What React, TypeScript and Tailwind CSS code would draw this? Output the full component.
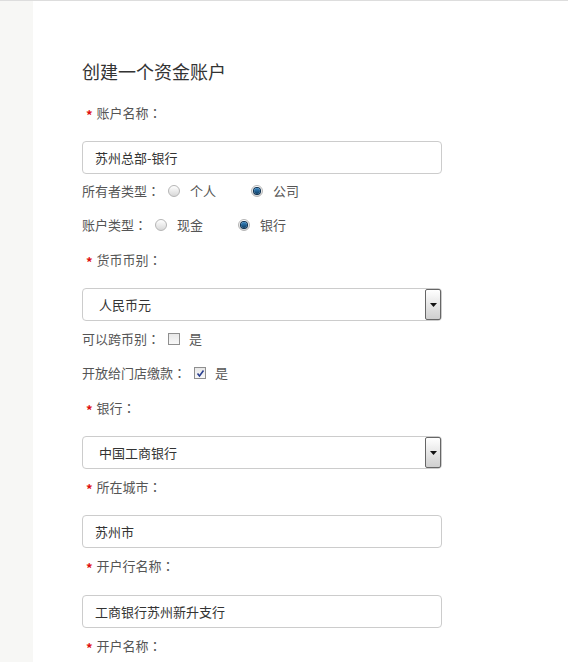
import React from "react";

const FONT = { fontFamily: '"Noto Sans CJK SC", "Noto Sans", sans-serif' };
const COLON_FONT = { fontFamily: '"Noto Sans CJK TC", "Noto Sans CJK SC", sans-serif' };

// full-width colon, centred like the reference
function Colon() {
  return <span style={COLON_FONT}>：</span>;
}

function Label({ text, className = "" }: { text: string; className?: string }) {
  return (
    <div className={`flex h-[20px] items-center text-[13px] leading-[20px] text-[#555] ${className}`}>
      <span className="ml-[4px] mr-[4px] mt-[4px] text-[13px] font-bold leading-[20px] text-[#e01010]">*</span>
      <span>{text}</span>
      <Colon />
    </div>
  );
}

function TextInput({ value, className = "" }: { value: string; className?: string }) {
  return (
    <div
      className={`flex h-[33px] w-[360px] items-center rounded-[4px] border border-[#cccccc] bg-white pl-[12px] text-[13px] text-[#333] ${className}`}
    >
      {value}
    </div>
  );
}

function SelectBox({ value, className = "" }: { value: string; className?: string }) {
  return (
    <div
      className={`flex h-[33px] w-[360px] items-center justify-between rounded-[4px] border border-[#cccccc] bg-white pl-[16px] text-[13px] text-[#333] ${className}`}
    >
      <span>{value}</span>
      <div className="flex h-[31px] w-[16px] items-center justify-center rounded-[2px] border border-[#666] bg-gradient-to-b from-white to-[#cfcfcf]">
        <svg width="7" height="4" viewBox="0 0 7 4">
          <path d="M0 0 L7 0 L3.5 4 Z" fill="#111" />
        </svg>
      </div>
    </div>
  );
}

function Radio({ checked }: { checked?: boolean }) {
  return (
    <span className="flex h-[12px] w-[12px] items-center justify-center rounded-full border border-[#b5b5b5] bg-gradient-to-b from-white to-[#d8d8d8]">
      {checked && (
        <span className="h-[6px] w-[6px] rounded-full bg-gradient-to-b from-[#3d8bc6] to-[#0b3d66] ring-1 ring-[#0a2d4d]" />
      )}
    </span>
  );
}

function Checkbox({ checked }: { checked?: boolean }) {
  return (
    <span className="flex h-[12px] w-[12px] items-center justify-center border border-[#8f8f8f] bg-gradient-to-b from-[#e8e8e8] to-[#f8f8f8]">
      {checked && (
        <svg width="9" height="9" viewBox="0 0 9 9">
          <path d="M1.5 4.5 L3.5 7 L7.5 1.5" stroke="#2b3f8f" strokeWidth="1.6" fill="none" />
        </svg>
      )}
    </span>
  );
}

function RadioRow({
  label,
  options,
  className = "",
}: {
  label: string;
  options: { text: string; checked?: boolean }[];
  className?: string;
}) {
  return (
    <div className={`flex h-[20px] items-center text-[13px] leading-[20px] text-[#555] ${className}`}>
      <span>{label}</span>
      <Colon />
      {options.map((opt, i) => (
        <span key={i} className={`ml-[8px] flex items-center ${i === 0 ? "mr-[27px]" : ""}`}>
          <Radio checked={opt.checked} />
          <span className="ml-[10px]">{opt.text}</span>
        </span>
      ))}
    </div>
  );
}

function CheckRow({ label, checked, className = "" }: { label: string; checked?: boolean; className?: string }) {
  return (
    <div className={`flex h-[20px] items-center text-[13px] leading-[20px] text-[#555] ${className}`}>
      <span>{label}</span>
      <Colon />
      <span className="ml-[8px]">
        <Checkbox checked={checked} />
      </span>
      <span className="ml-[9px]">是</span>
    </div>
  );
}

export default function App() {
  return (
    <div className="flex h-[662px] w-full overflow-hidden border-t border-[#dddddd] bg-white" style={FONT}>
      <aside className="w-[33px] shrink-0 bg-[#f7f7f5]" />
      <main className="flex flex-col pl-[49px] pt-[58px]">
        <h2 className="h-[24px] text-[18px] leading-[24px] font-normal text-[#333]">创建一个资金账户</h2>

        <Label text="账户名称" className="mt-[20px]" />
        <TextInput value="苏州总部-银行" className="mt-[18px]" />

        <RadioRow
          label="所有者类型"
          options={[{ text: "个人" }, { text: "公司", checked: true }]}
          className="mt-[7px]"
        />
        <RadioRow
          label="账户类型"
          options={[{ text: "现金" }, { text: "银行", checked: true }]}
          className="mt-[14px]"
        />

        <Label text="货币币别" className="mt-[15px]" />
        <SelectBox value="人民币元" className="mt-[18px]" />

        <CheckRow label="可以跨币别" className="mt-[8px]" />
        <CheckRow label="开放给门店缴款" checked className="mt-[14px]" />

        <Label text="银行" className="mt-[15px]" />
        <SelectBox value="中国工商银行" className="mt-[18px]" />

        <Label text="所在城市" className="mt-[8px]" />
        <TextInput value="苏州市" className="mt-[18px]" />

        <Label text="开户行名称" className="mt-[8px]" />
        <TextInput value="工商银行苏州新升支行" className="mt-[19px]" />

        <Label text="开户名称" className="mt-[8px]" />
      </main>
    </div>
  );
}
